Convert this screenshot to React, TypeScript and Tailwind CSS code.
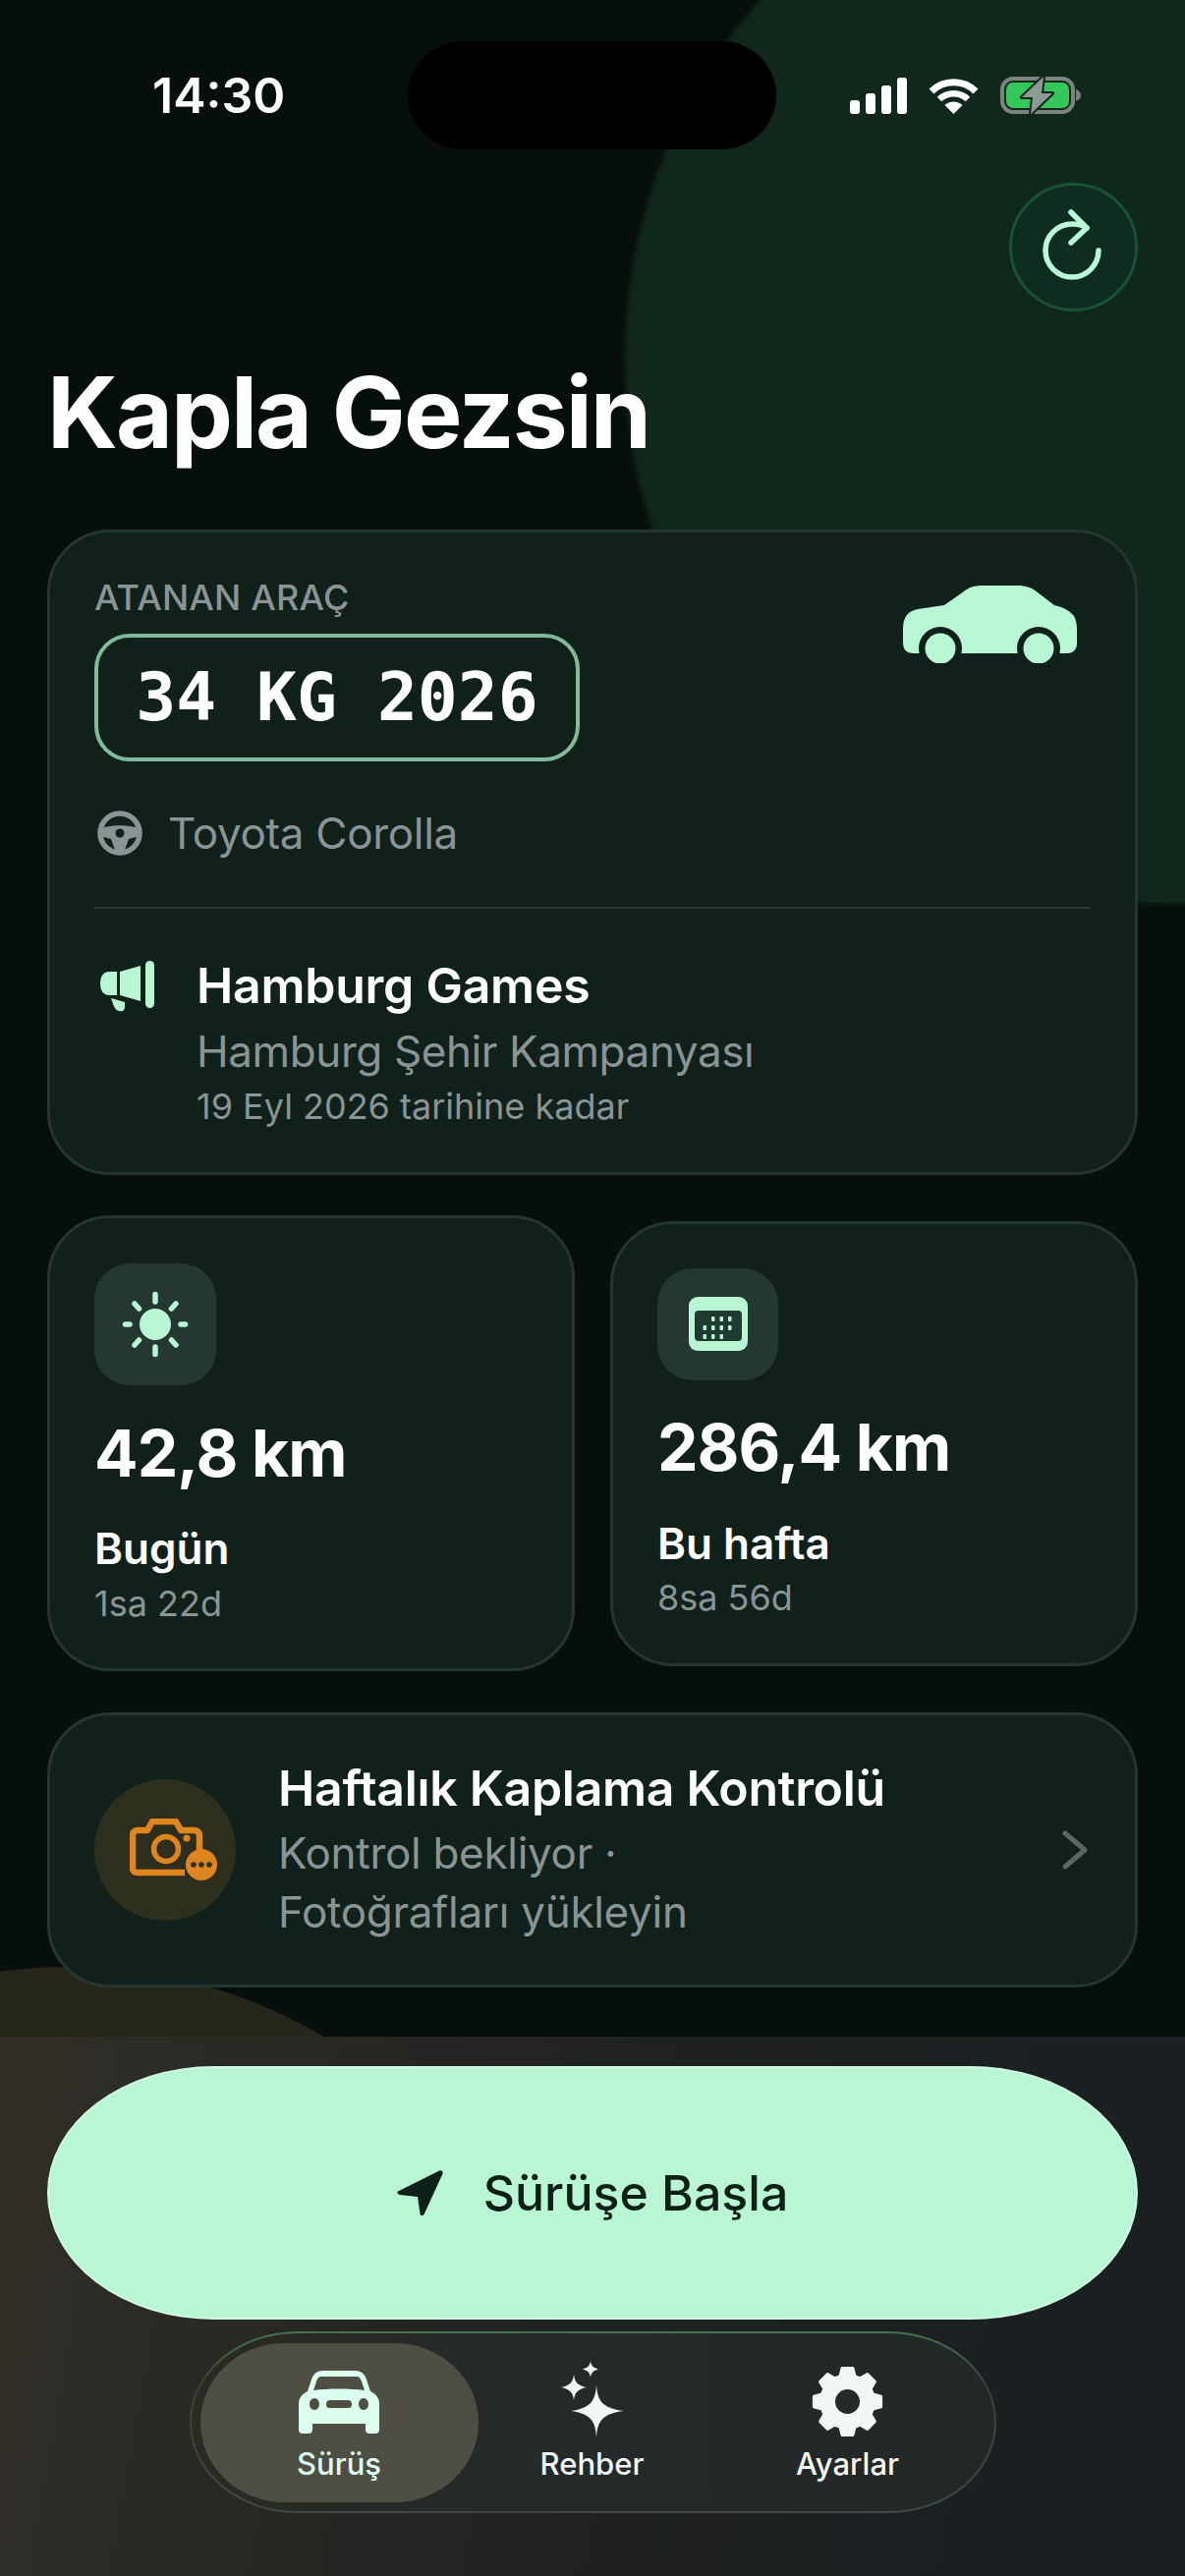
import React from 'react';

// 8 tooth gear outline, used by the Ayarlar tab
const gearPath = (() => {
  const pts: string[] = [];
  const teeth = 8;
  for (let i = 0; i < teeth; i++) {
    const a = (i * Math.PI * 2) / teeth - Math.PI / 2;
    const step = (Math.PI * 2) / teeth;
    const seq: [number, number][] = [
      [27, -step * 0.36],
      [34.5, -step * 0.2],
      [34.5, step * 0.2],
      [27, step * 0.36],
    ];
    seq.forEach(([r, d]) => {
      pts.push(`${(36.5 + r * Math.cos(a + d)).toFixed(2)} ${(36.5 + r * Math.sin(a + d)).toFixed(2)}`);
    });
  }
  return `M${pts.join('L')}Z`;
})();

const SignalIcon = () => (
  <svg width="58" height="37" viewBox="0 0 58 37" fill="#fff">
    <rect x="0" y="23" width="10" height="14" rx="3" />
    <rect x="16" y="16" width="10" height="21" rx="3" />
    <rect x="32" y="8" width="10" height="29" rx="3" />
    <rect x="48" y="0" width="10" height="37" rx="3" />
  </svg>
);

const WifiIcon = () => (
  <svg width="51" height="37" viewBox="0 0 51 37" fill="none" stroke="#fff">
    <path d="M3 14A32 32 0 0 1 48 14" strokeWidth="7" />
    <path d="M11 22A21 21 0 0 1 40 22" strokeWidth="6.5" />
    <path d="M25.5 37L16.5 28A13 13 0 0 1 34.5 28Z" fill="#fff" stroke="none" />
  </svg>
);

const BatteryIcon = () => (
  <svg width="82" height="40" viewBox="0 0 82 40" fill="none">
    <rect x="2" y="3" width="72" height="34" rx="11" stroke="#7c827e" strokeWidth="4" />
    <rect x="6" y="7" width="64" height="26" rx="7" fill="#34c759" />
    <path d="M77 14C80 15 82 17 82 20C82 23 80 25 77 26Z" fill="#7c827e" />
    <path
      d="M44 1L22 22H33L31 39L53 18H42Z"
      fill="#8b9a92"
      stroke="#10271c"
      strokeWidth="4"
      strokeLinejoin="round"
      paintOrder="stroke"
    />
  </svg>
);

const RefreshIcon = () => (
  <svg width="131" height="131" viewBox="0 0 131 131" fill="none" stroke="#b9f8d8" strokeWidth="5.5" strokeLinecap="round" strokeLinejoin="round">
    <path d="M91 69A27 27 0 1 1 64 42C70 42 75 43 79 46" />
    <path d="M63 30L79 46L63 61" />
  </svg>
);

const CarSideIcon = () => (
  <svg width="179" height="80" viewBox="0 0 179 80">
    <path
      d="M12 70C4 70 1 66 1 58V45C1 33 6 27 16 25L43 21L63 7C68 3 73 1 82 1H118C126 1 132 3 138 8L155 21C165 23 172 28 175 32C177 36 178 40 178 46V60C178 66 174 70 168 70Z"
      fill="#b9f6d3"
    />
    <circle cx="39" cy="65" r="22" fill="#10201b" />
    <circle cx="39" cy="65" r="15.5" fill="#b9f6d3" />
    <circle cx="139" cy="65" r="22" fill="#10201b" />
    <circle cx="139" cy="65" r="15.5" fill="#b9f6d3" />
  </svg>
);

const SteeringIcon = () => (
  <svg width="46" height="46" viewBox="0 0 46 46" fill="#8a9495">
    <circle cx="23" cy="23" r="20" fill="none" stroke="#8a9495" strokeWidth="5.5" />
    <path d="M3 19C10 14 36 14 43 19V26L32 29L27 43H19L14 29L3 26Z" />
    <circle cx="23" cy="23" r="4.5" fill="#10201b" />
  </svg>
);

const MegaphoneIcon = () => (
  <svg width="56" height="52" viewBox="0 0 56 52" fill="#b9f6d3">
    <path d="M9 11H17V35H9C3 35 0 30 0 23C0 16 3 11 9 11Z" />
    <path d="M20 11L41 5V41L20 35Z" />
    <rect x="46" y="0" width="9" height="48" rx="4.5" />
    <path d="M11 38L25 42V47C25 51 22 52 19 51C15 50 14 47 11 38Z" />
  </svg>
);

const SunIcon = () => (
  <svg width="68" height="68" viewBox="0 0 68 68" fill="#b9f6d3" stroke="#b9f6d3" strokeLinecap="round">
    <circle cx="34" cy="34" r="16" stroke="none" />
    <g strokeWidth="5.5">
      <path d="M34 3.500V11" />
      <path d="M34 57V64.500" />
      <path d="M3.500 34H8" />
      <path d="M60 34H64.500" />
      <path d="M13 13L17.500 18" />
      <path d="M55 13L50.500 18" />
      <path d="M13 55L17.500 50" />
      <path d="M55 55L50.500 50" />
    </g>
  </svg>
);

const CalendarIcon = () => (
  <svg width="60" height="55" viewBox="0 0 60 55">
    <rect width="60" height="55" rx="9" fill="#b9f6d3" />
    <rect x="6" y="14" width="48" height="31" rx="4" fill="#1f3a30" />
    <g fill="#b9f6d3">
      {[23, 31.500, 40].map((x) => (
        <rect key={`a${x}`} x={x} y="20" width="3.500" height="5" rx="1" />
      ))}
      {[14.500, 23, 31.500, 40].map((x) => (
        <rect key={`b${x}`} x={x} y="29" width="3.500" height="5" rx="1" />
      ))}
      {[14.500, 23, 31.500].map((x) => (
        <rect key={`c${x}`} x={x} y="38" width="3.500" height="5" rx="1" />
      ))}
    </g>
  </svg>
);

const CameraIcon = () => (
  <svg width="90" height="64" viewBox="0 0 90 64" fill="none" stroke="#df8520">
    <path
      d="M56 55H8C4 55 3 53 3 50V17C3 14 5 12 8 12H18L23 3H47L52 12H65C69 12 71 14 71 17V36"
      strokeWidth="6.500"
      strokeLinejoin="round"
    />
    <circle cx="37" cy="31" r="12.500" strokeWidth="5.500" />
    <circle cx="58" cy="20" r="3.500" fill="#df8520" stroke="none" />
    <circle cx="73" cy="47" r="16" fill="#df8520" stroke="none" />
    <g fill="#2e2e1c" stroke="none">
      <circle cx="65" cy="47" r="2.800" />
      <circle cx="73" cy="47" r="2.800" />
      <circle cx="81" cy="47" r="2.800" />
    </g>
  </svg>
);

const LocationIcon = () => (
  <svg width="47" height="47" viewBox="0 0 47 47" fill="#0c2018">
    <path d="M43 0.500C45.500 -0.500 47 1 46.500 3.500L28 44C26.500 47 24 47 23.500 44L21 27L3 25C0 24.500 -0.500 22 2 21Z" />
  </svg>
);

const CarFrontIcon = () => (
  <svg width="82" height="64" viewBox="0 0 82 64" fill="#dcfff0">
    <path
      fillRule="evenodd"
      d="M25 0H57C63 0 67 3 69 9L73 21C79 24 82 28 82 34V60C82 63 80 64 78 64H72C70 64 68 63 68 60V54H14V60C14 63 12 64 10 64H4C2 64 0 63 0 60V34C0 28 3 24 9 21L13 9C15 3 19 0 25 0ZM24 6C20 6 19 8 18 11L15 20C30 18 52 18 67 20L64 11C63 8 62 6 58 6ZM16 28C13 28 11 31 11 34C11 37 13 40 16 40C19 40 21 37 21 34C21 31 19 28 16 28ZM66 28C63 28 61 31 61 34C61 37 63 40 66 40C69 40 71 37 71 34C71 31 69 28 66 28ZM32 30C29 30 28 32 28 34C28 37 29 38 32 38H50C53 38 54 37 54 34C54 32 53 30 50 30Z"
    />
  </svg>
);

const SparklesIcon = () => (
  <svg width="64" height="78" viewBox="0 0 64 78" fill="#f2f6f6">
    <path d="M36 24C37 40 41 48 64 51C41 54 37 62 36 78C35 62 31 54 10 51C31 48 35 40 36 24Z" />
    <path d="M13 14C14 21 16 25 26 27C16 29 14 33 13 40C12 33 10 29 0 27C10 25 12 21 13 14Z" />
    <path d="M30 0C30.500 4 32 7 38 8.500C32 10 30.500 13 30 17C29.500 13 28 10 22 8.500C28 7 29.500 4 30 0Z" />
  </svg>
);

const GearIcon = () => (
  <svg width="73" height="73" viewBox="0 0 73 73">
    <path d={gearPath} fill="#f2f6f6" stroke="#f2f6f6" strokeWidth="3" strokeLinejoin="round" />
    <circle cx="36.500" cy="36.500" r="12.500" fill="#242929" />
  </svg>
);

const App: React.FC = () => {
  return (
    <div className="relative flex h-[2622px] w-[1206px] flex-col overflow-hidden bg-[#070f0d] [font-family:Inter,sans-serif] text-white">
      {/* background blobs */}
      <div className="absolute top-[-190px] left-[636px] h-[1110px] w-[1140px] rounded-full bg-[#10271c] blur-[2px]" />
      <div className="absolute top-[2002px] left-[-441px] h-[1022px] w-[1022px] rounded-full bg-[#27261a]" />

      {/* status bar */}
      <div className="relative flex items-center pt-[42px] pl-[155px]">
        <span className="w-[260px] text-[50px] leading-[60px] font-semibold">14:30</span>
        <div className="h-[110px] w-[375px] rounded-[55px] bg-black" />
        <div className="ml-[75px] flex items-center">
          <SignalIcon />
          <div className="ml-[22px]">
            <WifiIcon />
          </div>
          <div className="ml-[22px]">
            <BatteryIcon />
          </div>
        </div>
      </div>

      <div className="relative mt-[34px] mr-[48px] h-[131px] w-[131px] self-end rounded-full border-[3px] border-[#18523a] bg-[#0f2c20]">
        <div className="absolute top-[-3px] left-[-3px]">
          <RefreshIcon />
        </div>
      </div>

      <h1 className="relative mt-[48px] ml-[48px] text-[100px] leading-[110px] font-bold tracking-[-2px]">Kapla Gezsin</h1>

      {/* assigned vehicle */}
      <div className="relative mx-[48px] mt-[64px] box-border h-[657px] rounded-[64px] border-[3px] border-[#26352f] bg-[#10201b] px-[45px] pt-[46px]">
        <div className="flex items-start justify-between">
          <div>
            <p className="text-[36px] leading-[40px] font-medium tracking-[0.2px] text-[#8a9495]">ATANAN ARAÇ</p>
            <div className="mt-[17px] flex h-[130px] w-[494px] items-center justify-center rounded-[36px] border-[4px] border-[#82b99a] [font-family:'DejaVu_Sans_Mono',monospace] text-[68px] font-bold whitespace-pre">
              34 KG 2026
            </div>
          </div>
          <div className="mt-[7px] mr-[13px]">
            <CarSideIcon />
          </div>
        </div>

        <div className="mt-[43px] flex h-[60px] items-center pl-[3px]">
          <SteeringIcon />
          <span className="ml-[26px] text-[44px] leading-[60px] tracking-[-0.3px] text-[#8a9495]">Toyota Corolla</span>
        </div>

        <div className="mt-[45px] h-[2px] bg-[#2b3a35]" />

        <div className="mt-[48px] flex">
          <div className="mt-[5px] w-[104px] pl-[6px]">
            <MegaphoneIcon />
          </div>
          <div>
            <p className="text-[50px] leading-[60px] font-semibold tracking-[-0.25px]">Hamburg Games</p>
            <p className="mt-[10px] text-[44px] leading-[54px] tracking-[-0.4px] text-[#8a9495]">Hamburg Şehir Kampanyası</p>
            <p className="mt-[7px] text-[36px] leading-[44px] text-[#8a9495]">19 Eyl 2026 tarihine kadar</p>
          </div>
        </div>
      </div>

      {/* distance stats */}
      <div className="relative mx-[48px] mt-[41px] grid h-[464px] grid-cols-[537px_537px] items-center justify-between">
        <div className="box-border h-[464px] rounded-[64px] border-[3px] border-[#26352f] bg-[#10201b] pt-[46px] pl-[45px]">
          <div className="flex h-[124px] w-[124px] items-center justify-center rounded-[36px] bg-[#243730]">
            <SunIcon />
          </div>
          <p className="mt-[31px] text-[66px] leading-[76px] font-bold tracking-[-1px]">42,8 km</p>
          <p className="mt-[33px] text-[44px] leading-[52px] font-semibold">Bugün</p>
          <p className="mt-[10px] text-[36px] leading-[40px] text-[#8a9495]">1sa 22d</p>
        </div>
        <div className="box-border h-[453px] rounded-[64px] border-[3px] border-[#26352f] bg-[#10201b] pt-[45px] pl-[45px]">
          <div className="flex h-[114px] w-[123px] items-center justify-center rounded-[36px] bg-[#243730]">
            <CalendarIcon />
          </div>
          <p className="mt-[30px] text-[66px] leading-[76px] font-bold tracking-[-1px]">286,4 km</p>
          <p className="mt-[34px] text-[44px] leading-[52px] font-semibold">Bu hafta</p>
          <p className="mt-[9px] text-[36px] leading-[40px] text-[#8a9495]">8sa 56d</p>
        </div>
      </div>

      {/* weekly wrap check */}
      <div className="relative mx-[48px] mt-[42px] box-border flex h-[280px] items-center rounded-[64px] border-[3px] border-[#26352f] bg-[#10201b] pr-[48px] pl-[45px]">
        <div className="flex h-[144px] w-[144px] shrink-0 items-center justify-center rounded-full bg-[#2e2e1c]">
          <div className="ml-[18px]">
            <CameraIcon />
          </div>
        </div>
        <div className="ml-[43px] flex-1">
          <p className="text-[50px] leading-[60px] font-semibold tracking-[-0.3px]">Haftalık Kaplama Kontrolü</p>
          <p className="mt-[6px] text-[44px] leading-[60px] tracking-[-0.3px] text-[#8a9495]">
            Kontrol bekliyor ·
            <br />
            Fotoğrafları yükleyin
          </p>
        </div>
        <svg width="26" height="40" viewBox="0 0 26 40" fill="none" stroke="#5c6664" strokeWidth="5" strokeLinecap="round" strokeLinejoin="round">
          <path d="M3 3L23 20L3 37" />
        </svg>
      </div>

      {/* bottom panel */}
      <div className="relative mt-[50px] flex flex-1 flex-col bg-[linear-gradient(100deg,#302e26,#1e2021_55%,#1b1f21)] px-[48px] pt-[30px]">
        <button className="flex h-[258px] items-center justify-center gap-[41px] rounded-[170px/129px] border-2 border-[#cdfae2] bg-[#b9f6d3] text-[#0c2018]">
          <LocationIcon />
          <span className="text-[50px] leading-[60px] font-medium">Sürüşe Başla</span>
        </button>

        <div className="mt-[12px] h-[185px] w-[821px] self-center rounded-[110px/92px] bg-[linear-gradient(180deg,#43734f,#3a3f38_30%,#3e4a45)] p-[2px]">
          <div className="flex h-full items-center rounded-[108px/90px] bg-[linear-gradient(90deg,#2b2a23,#242929_40%,#222827)] pl-[9px]">
            <div className="flex h-[162px] w-[283px] flex-col items-center rounded-[85px/81px] bg-[#4e4e44] pt-[28px]">
              <CarFrontIcon />
              <span className="mt-[13px] text-[31px] leading-[36px] font-medium text-[#dcfff0]">Sürüş</span>
            </div>
            <div className="flex h-[162px] w-[232px] flex-col items-center pt-[18px]">
              <SparklesIcon />
              <span className="mt-[9px] text-[31px] leading-[36px] font-medium text-[#f2f6f6]">Rehber</span>
            </div>
            <div className="flex h-[162px] w-[288px] flex-col items-center pt-[23px]">
              <GearIcon />
              <span className="mt-[9px] text-[31px] leading-[36px] font-medium text-[#f2f6f6]">Ayarlar</span>
            </div>
          </div>
        </div>
      </div>
    </div>
  );
};

export default App;
